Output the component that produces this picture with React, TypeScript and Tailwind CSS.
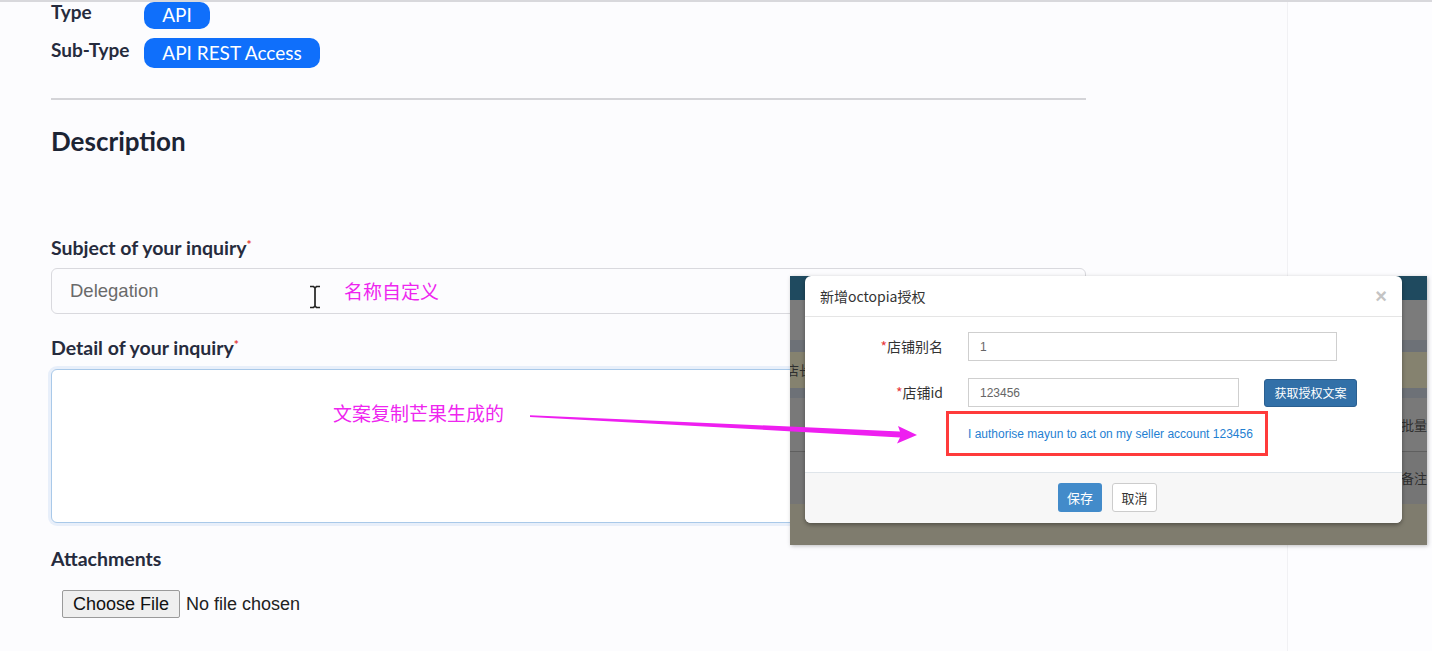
import React from 'react';

// ── Inline drawings ────────────────────────────────────────────────────────
function IBeam() {
  return (
    <svg width="14" height="24" viewBox="0 0 14 24" className="absolute left-[308px] top-[285px]">
      <path d="M2 1.5h3.5L7 3l1.5-1.5H12M7 3v18M2 22.5h3.5L7 21l1.5 1.5H12" fill="none" stroke="#222" strokeWidth="1.7" />
    </svg>
  );
}

function Arrow() {
  return (
    <svg width="1432" height="651" viewBox="0 0 1432 651" className="absolute left-0 top-0 pointer-events-none">
      <polygon
        points="530,415.2 900,431.4 898,426 917,435 897,443.5 900,437.4 530,416.9"
        fill="#ee1ff0"
      />
    </svg>
  );
}

// ── Pasted modal screenshot ────────────────────────────────────────────────
function ModalShot() {
  return (
    <div className="absolute left-[790px] top-[276px] w-[637px] h-[269px] overflow-hidden shadow-[1px_1px_4px_rgba(0,0,0,0.25)] font-['Noto_Sans_CJK_SC',sans-serif]">
      {/* background page behind the overlay */}
      <div className="flex flex-col h-full text-[13px] text-[#2e2e2e]">
        <div className="h-[24px] bg-[#1f4a5f]" />
        <div className="h-[40px] bg-[#7b7b7b]" />
        <div className="h-[12px] bg-[#6d7177]" />
        <div className="h-[36px] bg-[#85826f] flex items-center">
          <span className="ml-[-4px]">店长</span>
        </div>
        <div className="h-[10px] bg-[#6d7177]" />
        <div className="h-[54px] bg-[#797979] border-b border-[#5f5f5f] flex items-center justify-end">
          <span className="mr-[-10px] w-[36px]">批量</span>
        </div>
        <div className="h-[52px] bg-[#757575] flex items-center justify-end">
          <span className="mr-[-2px] w-[28px]">备注</span>
        </div>
        <div className="flex-1 bg-[#7f7c6e]" />
      </div>

      {/* modal dialog */}
      <div className="absolute left-[15px] top-0 w-[597px] h-[247px] bg-white rounded-[6px] shadow-[0_2px_4px_rgba(0,0,0,0.35)] flex flex-col overflow-hidden">
        <div className="h-[41px] border-b border-[#e5e5e5] flex items-center justify-between pl-[15px] pr-[15px]">
          <span className="text-[14px] text-[#333]">新增octopia授权</span>
          <span className="text-[20px] font-bold leading-none text-[#c4c4c4] font-['Liberation_Sans',sans-serif]">×</span>
        </div>

        <div className="pt-[15px] pb-[16px]">
          <div className="flex items-center h-[29px]">
            <label className="w-[138px] text-right text-[14px] text-[#333]">
              <span className="text-[#e8393d]">*</span>店铺别名
            </label>
            <div className="ml-[25px] w-[369px] h-[29px] border border-[#cfcfcf] flex items-center pl-[11px] text-[12px] text-[#666] font-['Liberation_Sans',sans-serif]">
              1
            </div>
          </div>

          <div className="flex items-center h-[29px] mt-[17px]">
            <label className="w-[138px] text-right text-[14px] text-[#333]">
              <span className="text-[#e8393d]">*</span>店铺id
            </label>
            <div className="ml-[25px] w-[271px] h-[29px] border border-[#cfcfcf] flex items-center pl-[11px] text-[12px] text-[#666] font-['Liberation_Sans',sans-serif]">
              123456
            </div>
            <button className="ml-[25px] w-[93px] h-[28px] bg-[#3270a8] border border-[#2b5f90] rounded-[3px] text-white text-[12px]">
              获取授权文案
            </button>
          </div>

          <div className="ml-[141px] mt-[4px] w-[322px] h-[45px] border-[3px] border-[#ff3b3b] flex items-center pl-[19px]">
            <span className="text-[12px] text-[#1f7fd2] font-['Liberation_Sans',sans-serif]">
              I authorise mayun to act on my seller account 123456
            </span>
          </div>
        </div>

        <div className="flex-1 border-t border-[#dfe5ea] bg-[#f7f7f7] flex justify-center pt-[10px] pl-[8px] gap-[10px]">
          <button className="w-[44px] h-[29px] bg-[#428bca] rounded-[3px] text-white text-[13px]">保存</button>
          <button className="w-[45px] h-[29px] bg-white border border-[#cccccc] rounded-[3px] text-[#333] text-[13px]">取消</button>
        </div>
      </div>
    </div>
  );
}

// ── Page ───────────────────────────────────────────────────────────────────
export default function App() {
  return (
    <div className="relative h-[651px] overflow-hidden bg-[#fcfcfe] font-['Lato',sans-serif]">
      <div className="h-[2px] bg-[#d8d8dc]" />
      <div className="flex h-[649px]">
        <main className="w-[1287px] shrink-0 pl-[51px] pr-[201px]">
          {/* Type / Sub-Type */}
          <div className="flex items-center h-[27px]">
            <span className="w-[93px] text-[19px] font-bold text-[#262b3d] -mt-[6px]">Type</span>
            <span className="w-[66px] h-[27px] rounded-[10px] bg-[#0f6ffb] text-white text-[19px] flex items-center justify-center">API</span>
          </div>
          <div className="flex items-center h-[30px] mt-[9px]">
            <span className="w-[93px] text-[19px] font-bold text-[#262b3d] -mt-[5px]">Sub-Type</span>
            <span className="w-[176px] h-[30px] rounded-[10px] bg-[#0f6ffb] text-white text-[19px] flex items-center justify-center">API REST Access</span>
          </div>

          <div className="h-[2px] bg-[#d4d4d8] mt-[30px]" />

          <h2 className="mt-[25px] text-[26px] leading-[32px] font-bold text-[#1c2434]">Description</h2>

          <label className="block mt-[79px] text-[19.5px] leading-[24px] font-bold text-[#262b3d]">
            Subject of your inquiry<sup className="text-[#e53935] text-[12px]">*</sup>
          </label>
          <div className="mt-[8px] h-[46px] border border-[#d9d9de] rounded-[6px] bg-[#fcfcfe] flex items-center pl-[18px] text-[18.5px] text-[#6a6a6a] font-['Liberation_Sans',sans-serif]">
            Delegation
          </div>

          <label className="block mt-[22px] text-[19.5px] leading-[24px] font-bold text-[#262b3d]">
            Detail of your inquiry<sup className="text-[#e53935] text-[12px]">*</sup>
          </label>
          <div className="mt-[9px] h-[154px] border border-[#a9c9e9] rounded-[6px] bg-white shadow-[0_0_0_3px_rgba(120,170,230,0.15)]" />

          <div className="mt-[24px] text-[19.5px] leading-[24px] font-bold text-[#262b3d]">Attachments</div>
          <div className="mt-[19px] ml-[11px] flex items-center font-['Liberation_Sans',sans-serif] text-[18px]">
            <button className="h-[28px] px-[10px] bg-[#efefef] border border-[#9a9a9a] rounded-[2px] text-[#111]">Choose File</button>
            <span className="ml-[6px] text-[#222]">No file chosen</span>
          </div>
        </main>
        <aside className="flex-1 border-l border-[#f1f1f4] bg-[#fdfdff]" />
      </div>

      {/* annotations */}
      <IBeam />
      <span className="absolute left-[344px] top-[279px] text-[19px] leading-[24px] text-[#ee26ef] font-['Noto_Sans_CJK_SC',sans-serif]">名称自定义</span>
      <span className="absolute left-[333px] top-[401px] text-[19px] leading-[24px] text-[#ee26ef] font-['Noto_Sans_CJK_SC',sans-serif]">文案复制芒果生成的</span>

      <ModalShot />
      <Arrow />
    </div>
  );
}
